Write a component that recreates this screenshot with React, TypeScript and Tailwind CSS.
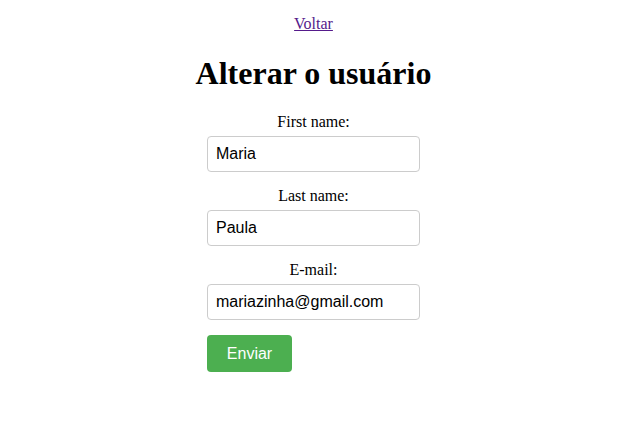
import { useState } from "react";

export default function App() {
  const [firstName, setFirstName] = useState("Maria");
  const [lastName, setLastName] = useState("Paula");
  const [email, setEmail] = useState("mariazinha@gmail.com");

  return (
    <div className="min-h-screen bg-white pl-[10px] font-['Liberation_Serif',serif] text-base text-black">
      <div className="flex flex-col items-center">
        <a href="#" className="mt-[12px] text-[#551a8b] underline">
          Voltar
        </a>

        <h1 className="mt-[19px] text-[32px] leading-[37px] font-bold">Alterar o usuário</h1>

        <form className="mt-[21px] flex w-[213px] flex-col" onSubmit={(e) => e.preventDefault()}>
          <label className="mb-[5px] text-center leading-[18px]">First name:</label>
          <input
            type="text"
            value={firstName}
            onChange={(e) => setFirstName(e.target.value)}
            className="mb-[15px] h-[36px] rounded border border-[#ccc] px-2 font-['Liberation_Sans',Arial,sans-serif] text-base"
          />

          <label className="mb-[5px] text-center leading-[18px]">Last name:</label>
          <input
            type="text"
            value={lastName}
            onChange={(e) => setLastName(e.target.value)}
            className="mb-[15px] h-[36px] rounded border border-[#ccc] px-2 font-['Liberation_Sans',Arial,sans-serif] text-base"
          />

          <label className="mb-[5px] text-center leading-[18px]">E-mail:</label>
          <input
            type="email"
            value={email}
            onChange={(e) => setEmail(e.target.value)}
            className="mb-[15px] h-[36px] rounded border border-[#ccc] px-2 font-['Liberation_Sans',Arial,sans-serif] text-base"
          />

          <div>
            <button
              type="submit"
              className="h-[37px] w-[85px] rounded bg-[#4caf50] font-['Liberation_Sans',Arial,sans-serif] text-base text-white"
            >
              Enviar
            </button>
          </div>
        </form>
      </div>
    </div>
  );
}
